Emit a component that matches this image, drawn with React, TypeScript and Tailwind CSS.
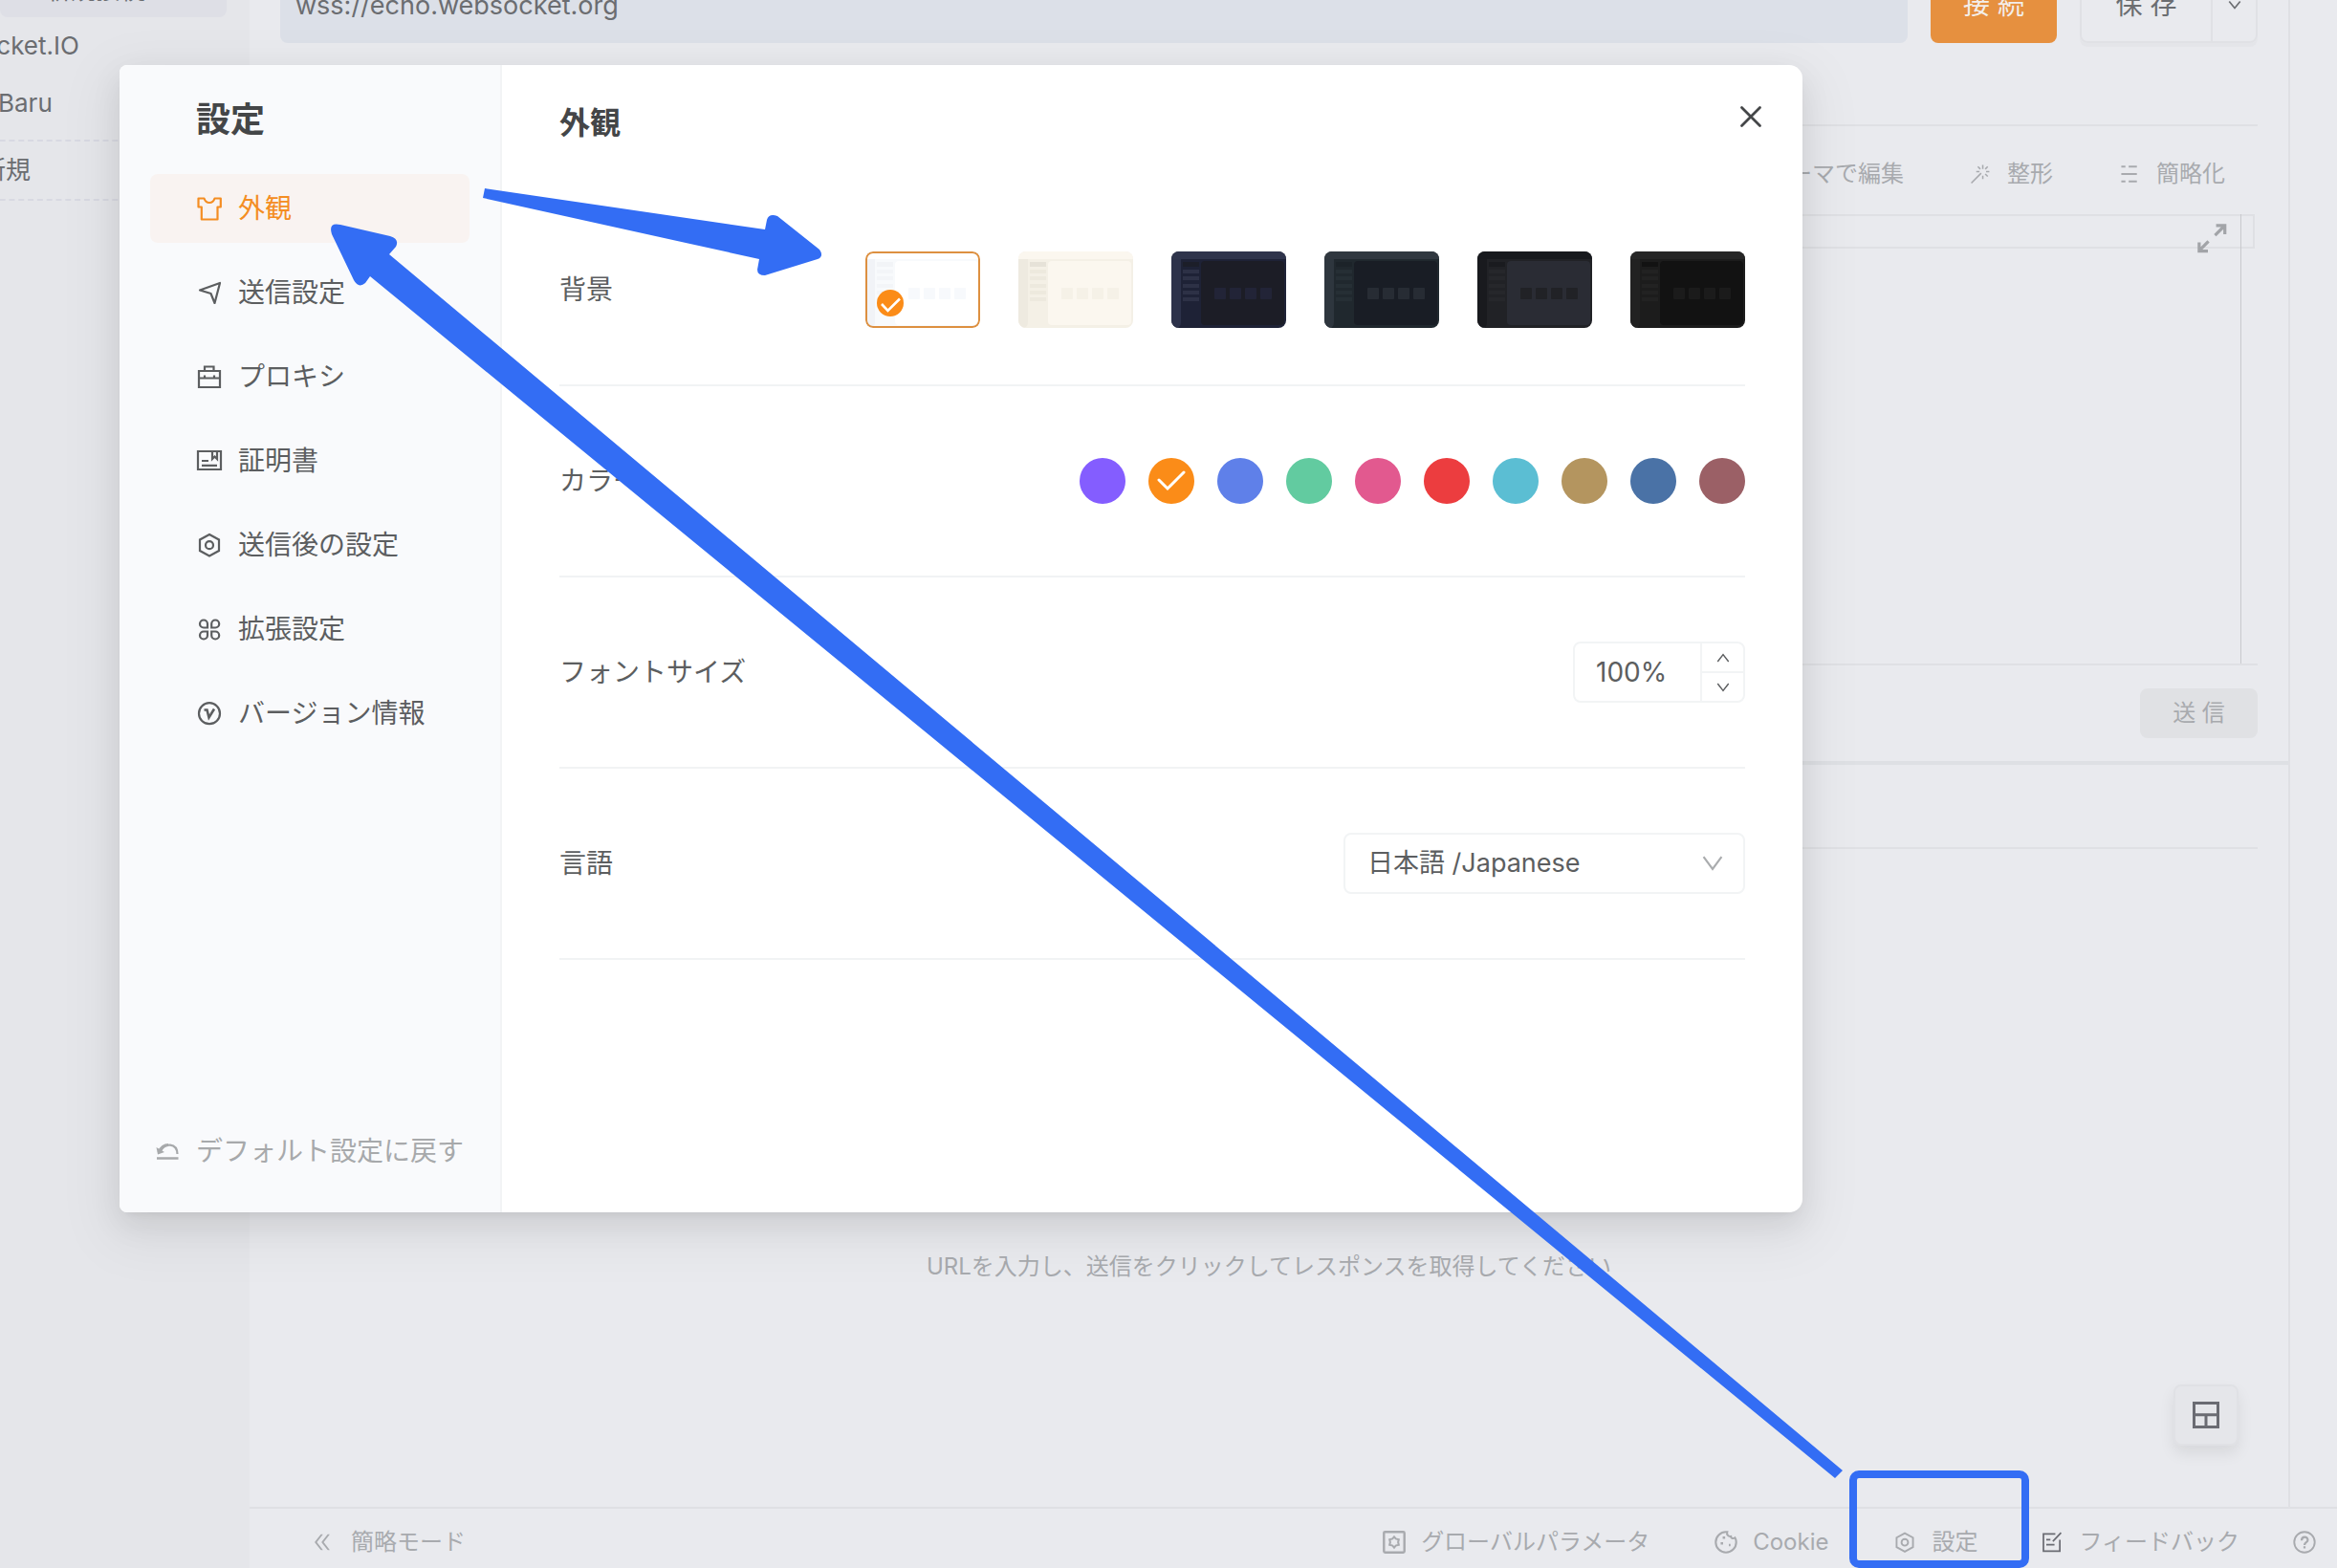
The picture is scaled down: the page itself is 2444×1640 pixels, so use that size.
import type { ReactNode } from "react";
import { AiOutlineDoubleLeft } from "react-icons/ai";

const stroke = {
  fill: "none",
  stroke: "currentColor",
  strokeWidth: 2.2,
} as const;

function Icon({ children, className = "size-7" }: { children: ReactNode; className?: string }) {
  return (
    <svg viewBox="0 0 28 28" className={`shrink-0 ${className}`} aria-hidden="true" {...stroke}>
      {children}
    </svg>
  );
}

const HexIcon = ({ className }: { className?: string }) => (
  <Icon className={className}>
    <path d="M14 3 L24 8.5 V20 L14 25.5 L4 20 V8.5 Z" />
    <circle cx="14" cy="14.2" r="4" />
  </Icon>
);

const NAV: { label: string; icon: ReactNode; active?: boolean }[] = [
  {
    label: "外観",
    icon: (
      <Icon>
        <path
          d="M2.500 3.500 H8.500 C9.500 6.500 11.500 8 14 8 C16.500 8 18.500 6.500 19.500 3.500 H25.800 V12.500 H22.500 V25.500 H5.800 V12.500 H2.500 Z"
          strokeLinejoin="round"
        />
      </Icon>
    ),
    active: true,
  },
  {
    label: "送信設定",
    icon: (
      <Icon>
        <path d="M25 4 L19.5 25 L15.5 15 L4 11.5 Z" strokeLinejoin="round" />
      </Icon>
    ),
  },
  {
    label: "プロキシ",
    icon: (
      <Icon>
        <path d="M3 8 H25 V25 H3 Z M3 15.5 H25 M9 8 V3.5 H18.5 V8 M9 12.5 V15.5 M19 12.5 V15.5" />
      </Icon>
    ),
  },
  {
    label: "証明書",
    icon: (
      <Icon>
        <path d="M2 4 H26 V23 H2 Z M6 14 H13 M6 18.8 H22" />
        <path d="M17 5 V12 L19.5 9.5 L22 12 V5" />
      </Icon>
    ),
  },
  { label: "送信後の設定", icon: <HexIcon /> },
  {
    label: "拡張設定",
    icon: (
      <Icon>
        <path d="M12 12.5 H8 A4 4 0 1 1 12 8.5 Z M16.2 12.5 V8.5 A4 4 0 1 1 20.2 12.5 Z M12 16.5 V20.5 A4 4 0 1 1 8 16.5 Z M16.2 16.5 H20.2 A4 4 0 1 1 16.2 20.5 Z" />
      </Icon>
    ),
  },
  {
    label: "バージョン情報",
    icon: (
      <Icon>
        <circle cx="14" cy="14.2" r="11" />
        <path d="M8.500 10.500 H11.500 L13.500 18.500 L19 9.500" strokeWidth="2.600" />
      </Icon>
    ),
  },
];

interface Theme {
  name: string;
  top: string;
  rail: string;
  body: string;
  first: string;
  item: string;
  panel: string;
  tile: string;
}

const THEMES: Theme[] = [
  { name: "ライト", top: "#ffffff", rail: "#f1f3f7", body: "#f8fafc", first: "#f2f4f7", item: "#f3f5f8", panel: "#ffffff", tile: "#f7f9fc" },
  { name: "クリーム", top: "#fbf7ef", rail: "#eeeae0", body: "#f4f0e6", first: "#e6e2d8", item: "#ede9de", panel: "#fbf7ef", tile: "#f5f1e7" },
  { name: "ネイビー", top: "#2f344b", rail: "#2d324a", body: "#1e2236", first: "#1c1e29", item: "#2d3146", panel: "#1c1d26", tile: "#222437" },
  { name: "ミッドナイト", top: "#30373f", rail: "#2e363e", body: "#20282e", first: "#1c2329", item: "#262f35", panel: "#191d25", tile: "#272c34" },
  { name: "グラファイト", top: "#17191d", rail: "#191a1e", body: "#212226", first: "#1a1b1f", item: "#26272b", panel: "#2a2c34", tile: "#212226" },
  { name: "ブラック", top: "#262626", rail: "#212121", body: "#1c1c1c", first: "#121212", item: "#222222", panel: "#121212", tile: "#1b1b1b" },
];

const COLORS = [
  { name: "パープル", tint: "bg-[#845dff]" },
  { name: "オレンジ", tint: "bg-[#fb8c18]" },
  { name: "ブルー", tint: "bg-[#5f80e9]" },
  { name: "グリーン", tint: "bg-[#62cba0]" },
  { name: "ピンク", tint: "bg-[#e2598f]" },
  { name: "レッド", tint: "bg-[#ec3d3f]" },
  { name: "シアン", tint: "bg-[#5bbed3]" },
  { name: "ゴールド", tint: "bg-[#b4955f]" },
  { name: "ネイビー", tint: "bg-[#4a72a6]" },
  { name: "ブラウン", tint: "bg-[#9b6066]" },
];

function ThemeThumb({ t }: { t: Theme }) {
  return (
    <svg viewBox="0 0 120 80" className="h-20 w-[120px]" aria-hidden="true">
      <rect width="120" height="80" fill={t.body} />
      <rect width="120" height="8" fill={t.top} />
      <path d="M0 8 H10 V74 Q10 80 4 80 H0 Z" fill={t.rail} />
      <rect x="12" y="11" width="17" height="5" fill={t.first} />
      {[19, 26, 34, 41, 48].map((y) => (
        <rect key={y} x="12" y={y} width="17" height="4" fill={t.item} />
      ))}
      <rect x="31" y="10" width="87" height="67" rx="4" fill={t.panel} />
      {[45, 61, 77, 93].map((x) => (
        <rect key={x} x={x} y="38" width="12" height="12" rx="1" fill={t.tile} />
      ))}
    </svg>
  );
}

function SettingRow({ label, id, children }: { label: string; id?: string; children: ReactNode }) {
  return (
    <div className="flex h-[200px] items-center justify-between border-b-2 border-[#f1f3f4]">
      {id ? <label htmlFor={id}>{label}</label> : <span>{label}</span>}
      {children}
    </div>
  );
}

function SettingsDialog() {
  return (
    <section
      role="dialog"
      aria-label="設定"
      className="flex min-h-[1200px] flex-1 overflow-hidden rounded-l-lg rounded-r-[14px] bg-white text-[28px] leading-10 text-[#5c5e60] shadow-[0_12px_32px_rgba(0,0,0,0.08),0_6px_12px_-8px_rgba(0,0,0,0.12),0_18px_56px_16px_rgba(0,0,0,0.05)]"
    >
      <aside className="flex w-[400px] shrink-0 flex-col border-r-2 border-[#f2f4f5] bg-[#f9fafc] px-8 pt-[33px] pb-11">
        <h1 className="pl-12 text-4xl leading-[48px] font-bold text-[#444648]">設定</h1>
        <nav className="mt-[33px] flex flex-col gap-4">
          {NAV.map((n) => (
            <button
              key={n.label}
              type="button"
              className={
                n.active
                  ? "flex h-[72px] items-center gap-4 rounded-lg bg-[#f9f3f1] pl-12 text-[#f48d22]"
                  : "flex h-[72px] items-center gap-4 rounded-lg pl-12"
              }
            >
              {n.icon}
              {n.label}
            </button>
          ))}
        </nav>
        <button type="button" className="mt-auto flex items-center gap-4 pl-1 text-[#a7a9ab]">
          <Icon>
            <path d="M3 21.5 H25.5" strokeWidth="2.4" />
            <path d="M7 14 C11 5 24 5 24.5 17" />
            <path d="M2.5 10 L4 17.5 L11 15 Z" fill="currentColor" stroke="none" />
            <path d="M5 15 C8 9 11 7.500 15 7.500" strokeWidth="3" />
          </Icon>
          デフォルト設定に戻す
        </button>
      </aside>
      <div className="min-w-0 flex-1 px-[60px]">
        <header className="relative flex h-[136px] items-start pt-[41px]">
          <h2 className="text-[32px] leading-10 font-bold text-[#444648]">外観</h2>
          <button
            type="button"
            aria-label="閉じる"
            className="absolute top-9 -right-6 flex size-9 items-center justify-center text-[#444648]"
          >
            <Icon>
              <path d="M4.500 4.500 L23.500 23.500 M23.500 4.500 L4.500 23.500" strokeWidth="2.800" strokeLinecap="round" />
            </Icon>
          </button>
        </header>
        <SettingRow label="背景">
          <div className="flex gap-10" role="radiogroup" aria-label="背景">
            {THEMES.map((t, i) => (
              <label key={t.name} className="relative h-20 w-[120px] overflow-hidden rounded-lg">
                <input type="radio" name="theme" aria-label={t.name} defaultChecked={i === 0} className="sr-only" />
                <ThemeThumb t={t} />
                {i === 0 && (
                  <>
                    <span className="absolute inset-0 rounded-lg border-2 border-[#dd9040]" />
                    <svg viewBox="0 0 28 28" className="absolute bottom-3 left-3 size-7" aria-hidden="true">
                      <circle cx="14" cy="14" r="14" fill="#fb8c18" />
                      <path d="M5 15 L11.5 22 L24 9.500" fill="none" stroke="#fff" strokeWidth="2.600" />
                    </svg>
                  </>
                )}
              </label>
            ))}
          </div>
        </SettingRow>
        <SettingRow label="カラー">
          <div className="flex gap-6" role="radiogroup" aria-label="カラー">
            {COLORS.map((c, i) => (
              <label key={c.name} className={`relative size-12 rounded-full ${c.tint}`}>
                <input type="radio" name="color" aria-label={c.name} defaultChecked={i === 1} className="sr-only" />
                {i === 1 && (
                  <svg viewBox="0 0 48 48" className="size-12" aria-hidden="true">
                    <path d="M11 23 L20 32 L37 15" fill="none" stroke="#fff" strokeWidth="3" strokeLinecap="round" />
                  </svg>
                )}
              </label>
            ))}
          </div>
        </SettingRow>
        <SettingRow label="フォントサイズ" id="font-size">
          <div className="flex h-16 w-[180px] overflow-hidden rounded-lg border-2 border-[#f2f4f5]">
            <input id="font-size" defaultValue="100%" className="min-w-0 flex-1 pl-[22px] outline-none" />
            <div className="flex w-[45px] flex-col border-l-2 border-[#f2f4f5]">
              <button
                type="button"
                aria-label="大きく"
                className="flex flex-1 items-center justify-center border-b-2 border-[#f2f4f5]"
              >
                <Icon className="size-4">
                  <path d="M4 21 L14 8 L24 21" strokeWidth="2.500" />
                </Icon>
              </button>
              <button type="button" aria-label="小さく" className="flex flex-1 items-center justify-center">
                <Icon className="size-4">
                  <path d="M4 7 L14 20 L24 7" strokeWidth="2.500" />
                </Icon>
              </button>
            </div>
          </div>
        </SettingRow>
        <SettingRow label="言語" id="language">
          <div className="relative">
            <select
              id="language"
              className="h-16 w-[420px] appearance-none rounded-lg border-2 border-[#f2f4f5] bg-white pr-16 pl-[23px] text-[27px] outline-none"
            >
              <option>日本語 /Japanese</option>
            </select>
            <Icon className="pointer-events-none absolute top-5 right-[22px] size-6 text-[#aaacae]">
              <path d="M3 6 L14 21 L25 6" strokeWidth="2.500" />
            </Icon>
          </div>
        </SettingRow>
      </div>
    </section>
  );
}

function Sidebar() {
  return (
    <aside className="w-[261px] shrink-0 overflow-hidden bg-[#e5e6ea] text-[26px] leading-8 whitespace-nowrap text-[#6b6d71]">
      <div className="-mt-8 mr-6 flex h-[50px] rounded-lg bg-[#dedfe6] pt-1.5 pl-12">新規接続</div>
      <ul>
        <li className="mt-[14px] -ml-9">Socket.IO</li>
        <li className="mt-7 -ml-0.5">Baru</li>
      </ul>
      <button
        type="button"
        className="mt-[22px] -ml-5 flex h-16 w-[261px] items-center border-y-2 border-dashed border-[#d8d9e2]"
      >
        <span>新規</span>
      </button>
    </aside>
  );
}

function RequestPane() {
  return (
    <main className="relative flex min-w-0 flex-1 flex-col border-r-2 border-[#dfe0e4]">
      <div className="mx-8 flex h-[45px] shrink-0 items-end gap-6 text-[28px] text-[#6b6d71]">
        <input
          aria-label="URL"
          defaultValue="wss://echo.websocket.org"
          className="h-20 min-w-0 flex-1 rounded-lg bg-[#dce0e8] px-4 text-[27px] outline-none"
        />
        <button type="button" className="h-20 w-[132px] shrink-0 rounded-lg bg-[#e6903f] text-[#f3eeea]">
          接 続
        </button>
        <div className="flex h-20 w-[186px] shrink-0 rounded-lg border-2 border-[#e0e1e5] shadow-[0_4px_0_rgba(0,0,0,0.02)]">
          <button type="button" className="flex-1">
            保 存
          </button>
          <button
            type="button"
            aria-label="保存オプション"
            className="flex w-[47px] items-center justify-center border-l-2 border-[#e0e1e5]"
          >
            <Icon className="size-4">
              <path d="M4 8 L14 20 L24 8" strokeWidth="3" />
            </Icon>
          </button>
        </div>
      </div>
      <div className="mx-8 h-[87px] shrink-0 border-b-2 border-[#dfe0e4]" />
      <div className="mx-8 flex h-[92px] shrink-0 items-center justify-end gap-[68px] pt-2 pr-[34px] text-2xl text-[#a8aaae]">
        <button type="button">スキーマで編集</button>
        <button type="button" className="flex items-center gap-4">
          <Icon className="size-6">
            <path d="M3 25 L15 13 M17 3 V8 M17 16 V20 M9 11 H13 M21 11 H25 M11 5 L14 8 M20 8 L23 5 M20 14 L23 17" strokeWidth="1.800" />
          </Icon>
          整形
        </button>
        <button type="button" className="flex items-center gap-4">
          <Icon className="size-6">
            <path d="M4 5 H9 M13 5 H23 M4 14 H23 M4 23 H9 M13 23 H23" />
          </Icon>
          簡略化
        </button>
      </div>
      <div className="relative mx-8 flex h-[472px] shrink-0 flex-col border-b-2 border-[#dfe0e4]">
        <div className="mr-[3px] h-9 border-2 border-[#dfe0e4]" />
        <span className="absolute top-0 right-[17px] bottom-0 w-px bg-[#c8c9cd]" />
        <button type="button" aria-label="全画面" className="absolute top-[9px] right-8 size-8 text-[#a2a4a8]">
          <Icon className="size-8">
            <path d="M17 11.500 L25 3.500 M18 2.500 H26 V10.500 M11 17 L3 25 M2.500 18 V26 H10.500" strokeWidth="2.800" />
          </Icon>
        </button>
      </div>
      <div className="mx-8 flex h-[100px] shrink-0 items-center justify-end">
        <button type="button" className="h-[52px] w-[123px] rounded-lg bg-[#e0e1e4] text-2xl text-[#a8aaae]">
          送 信
        </button>
      </div>
      <div className="h-1 shrink-0 bg-[#dee0e4]" />
      <div className="mx-8 h-[88px] shrink-0 border-b-2 border-[#dfe0e4]" />
      <p className="pt-[419px] text-center text-2xl leading-9 text-[#a8aaae]">
        URLを入力し、送信をクリックしてレスポンスを取得してください
      </p>
      <button
        type="button"
        aria-label="レイアウト"
        className="absolute right-[52px] bottom-16 flex h-16 w-[68px] items-center justify-center rounded-lg border-2 border-[#e0e1e5] bg-[#e5e6ea] text-[#6a6b72] shadow-[0_8px_16px_rgba(0,0,0,0.08)]"
      >
        <Icon>
          <path d="M1.500 1.500 H26.500 V26.500 H1.500 Z M1.500 13.800 H26.500 M14 14 V26.500" strokeWidth="3" />
        </Icon>
      </button>
    </main>
  );
}

function FooterBar() {
  return (
    <footer className="flex h-16 shrink-0 items-center justify-between border-t-2 border-[#dfe0e4] pt-2 pr-[22px] pl-16 text-2xl text-[#a8aaae]">
      <button type="button" className="flex items-center gap-[18px]">
        <AiOutlineDoubleLeft className="size-6" />
        簡略モード
      </button>
      <div className="flex items-center">
        <button type="button" className="mr-[68px] flex items-center gap-4">
          <Icon className="size-6">
            <rect x="1.500" y="1.500" width="25" height="25" rx="1.500" strokeWidth="2.800" />
            <path
              d="M14 7.500 L16 9.800 L19.600 10.700 L18.800 14 L19.600 17.300 L16 18.200 L14 20.500 L12 18.200 L8.400 17.300 L9.200 14 L8.400 10.700 L12 9.800 Z"
              strokeWidth="2.400"
            />
          </Icon>
          グローバルパラメータ
        </button>
        <button type="button" className="mr-[68px] flex items-center gap-4">
          <Icon className="size-6">
            <path d="M14 1.500 A12.500 12.500 0 1 0 26.500 14 C26.500 12 25.800 9.500 25 8.500 C23 10 20 9.500 20 7 C17 7.500 14.500 5 15.500 1.500 Z" strokeWidth="2.400" />
            <path d="M10 8.500 H13 M7.500 15.500 H10.500 M17.500 17.500 H19.500" strokeWidth="3" />
          </Icon>
          Cookie
        </button>
        <button type="button" className="mr-[66px] flex items-center gap-4">
          <HexIcon className="size-6" />
          設定
        </button>
        <button type="button" className="mr-14 flex items-center gap-4">
          <Icon className="size-6 text-[#6a6b72]">
            <path d="M18 4 H3.500 V25 H23.500 V11 M7 11 H12 M7 17 H17 M15 13 L25 2.500" strokeWidth="2" />
          </Icon>
          フィードバック
        </button>
        <button type="button" aria-label="ヘルプ">
          <Icon className="size-6">
            <circle cx="14" cy="14" r="12.500" />
            <path d="M10.500 12 C10.500 6.500 18 6.500 18 11.500 C18 14.500 14 14 14 17.500 M14 19 V21.500" strokeWidth="2.600" />
          </Icon>
        </button>
      </div>
    </footer>
  );
}

/* Pointers that lead from the footer entry to the appearance page and its themes. */
function Annotations() {
  return (
    <div className="pointer-events-none absolute inset-0">
      <svg className="size-full" fill="#336df4" aria-hidden="true">
        <path d="M507 197 L800 240 L802 230 Q804 223 813 226 L857 261 Q862 268 855 271 L800 288 Q792 288 792 282 L794 271 L505 207 Z" />
        <path d="M347 245 Q343 232 356 235 L408 247 Q418 250 414 258 L407 266 L1927 1538 L1919 1546 L387 289 L382 296 Q375 302 370 293 Z" />
      </svg>
      <div className="absolute right-[322px] bottom-0 h-[102px] w-[188px] rounded-[10px] border-8 border-[#336df4]" />
    </div>
  );
}

export default function App() {
  return (
    <div className="relative h-screen min-h-[1340px] overflow-hidden bg-[#e9eaee] font-['Inter','Noto_Sans_CJK_JP',sans-serif]">
      <div className="flex h-full">
        <Sidebar />
        <div className="flex min-w-0 flex-1 flex-col">
          <div className="flex min-h-0 flex-1">
            <RequestPane />
            <div className="w-[49px] shrink-0" />
          </div>
          <FooterBar />
        </div>
      </div>
      <div className="absolute inset-0 flex items-start pt-[68px] pr-[559px] pl-[125px]">
        <SettingsDialog />
      </div>
      <Annotations />
    </div>
  );
}
